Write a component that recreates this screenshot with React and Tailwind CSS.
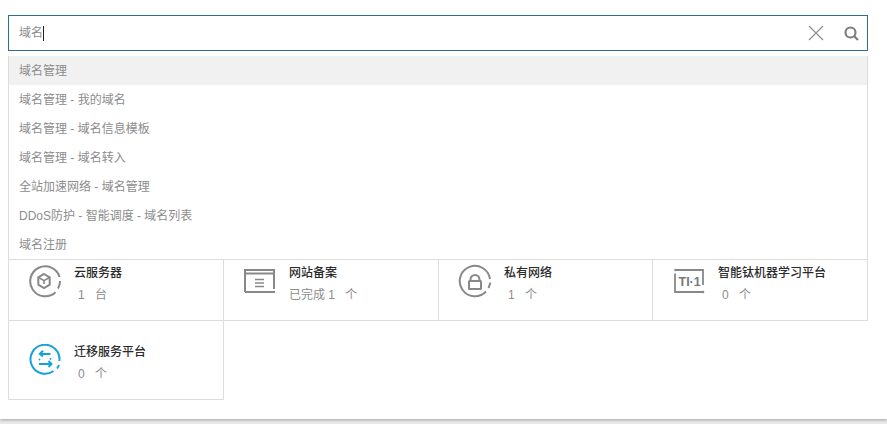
import { useState } from "react";

const font = "font-['Liberation_Sans','Noto_Sans_CJK_SC',sans-serif]";

const suggestions = [
  "域名管理",
  "域名管理 - 我的域名",
  "域名管理 - 域名信息模板",
  "域名管理 - 域名转入",
  "全站加速网络 - 域名管理",
  "DDoS防护 - 智能调度 - 域名列表",
  "域名注册",
];

function ServerIcon() {
  return (
    <svg width="34" height="34" viewBox="0 0 34 34" fill="none" stroke="#87888a" strokeWidth="2">
      <path d="M27.5 28.2A15 15 0 1 1 31.6 13" />
      <path d="M32 17a15 15 0 0 1-2 7.5" />
      <path d="M16 10l5.700 3.300v7.400L16 24l-5.700-3.300v-7.400z" />
      <path d="M11 13.800l5 2.900 5-2.900M16 16.700v3.300" strokeWidth="1.600" />
    </svg>
  );
}

function RecordIcon() {
  return (
    <svg width="32" height="28" viewBox="0 0 32 28" fill="none" stroke="#87888a" strokeWidth="2">
      <path d="M1 25V3h29v19" />
      <path d="M1 6.500h29" />
      <path d="M1 25h30" />
      <path d="M11 12.500h9M11 16h9M11 19.500h9" strokeWidth="1.500" />
    </svg>
  );
}

function VpcIcon() {
  return (
    <svg width="34" height="34" viewBox="0 0 34 34" fill="none" stroke="#87888a" strokeWidth="2">
      <path d="M28 27.500A15.200 15.200 0 1 1 32 15" />
      <path d="M32.200 18.500a15 15 0 0 1-1.800 5.500" />
      <rect x="11" y="17" width="12" height="8" rx="0.500" />
      <path d="M12.500 17v-1.500a4.500 4.500 0 0 1 9 0V17" />
    </svg>
  );
}

function TiIcon() {
  return (
    <svg width="32" height="28" viewBox="0 0 32 28" fill="none" stroke="#87888a" strokeWidth="1.800">
      <path d="M2 3h28v15" />
      <path d="M2 6.500V25h28" />
      <circle cx="2.500" cy="3" r="1.300" fill="#87888a" stroke="none" />
      <circle cx="30" cy="25" r="1.300" fill="#87888a" stroke="none" />
      <text x="5.500" y="19" fontSize="12.500" fontWeight="700" fill="#77787a" stroke="none" fontFamily="Liberation Sans">TI·1</text>
    </svg>
  );
}

function MigrateIcon() {
  return (
    <svg width="32" height="32" viewBox="0 0 32 32" fill="none" stroke="#12a3dc" strokeWidth="2">
      <path d="M24.500 27A14.500 14.500 0 1 1 30.400 17" />
      <path d="M30 21a14.500 14.500 0 0 1-2 3.500" />
      <path d="M21.500 10H11M14 6.800L10.800 10l3.200 2.500" />
      <path d="M10 20h12.500M19.500 17l3 3-3 3" />
      <circle cx="10.500" cy="15.500" r="0.900" fill="#12a3dc" stroke="none" />
      <circle cx="21.500" cy="15" r="0.900" fill="#12a3dc" stroke="none" />
    </svg>
  );
}

function Card({ icon, title, count, unit, className, countClass = "pl-1", rowClass = "h-20 pt-[23px]" }) {
  return (
    <div className={`flex items-start border-[#dddddd] pl-[19px] ${rowClass} ${className}`}>
      <div className="flex h-[34px] w-[34px] shrink-0 items-center justify-center">{icon}</div>
      <div className="ml-3 text-xs leading-[18px]">
        <div className="font-medium text-[#2b2b2b]">{title}</div>
        <div className={`mt-1 text-[#8c8c8c] ${countClass}`}>
          {count} <span className="ml-[7px]">{unit}</span>
        </div>
      </div>
    </div>
  );
}

export default function App() {
  const [query] = useState("域名");

  return (
    <div className={`h-[424px] overflow-hidden bg-[#e9e9e9] ${font}`}>
      <div className="h-[419px] bg-white px-2 pt-[15px] shadow-[0_1px_3px_rgba(0,0,0,0.3)]">
        <div className="relative w-[860px]">
          <div className="flex h-9 items-center border border-[#2f6f8f] bg-white pl-[10px] pr-2">
            <span className="text-xs text-[#8c8c8c]">{query}</span>
            <span className="h-[15px] w-px bg-[#222222]" />
            <svg className="ml-auto" width="16" height="16" viewBox="0 0 16 16" stroke="#8f8f8f" strokeWidth="1.200">
              <path d="M1 1l14 14M15 1L1 15" />
            </svg>
            <svg className="ml-5" width="15" height="15" viewBox="0 0 15 15" fill="none" stroke="#7d7d7d" strokeWidth="2.200">
              <circle cx="6.500" cy="6.500" r="5" />
              <path d="M10.500 10.500l3.500 3.500" />
            </svg>
          </div>

          <ul className="absolute left-0 top-[41px] z-10 w-full border border-t-0 border-[#dddddd] bg-white">
            {suggestions.map((item, i) => (
              <li
                key={item}
                className={`h-[29px] px-[10px] text-xs leading-[31px] text-[#8c8c8c] ${i === 0 ? "bg-[#f1f1f1]" : ""}`}
              >
                {item}
              </li>
            ))}
          </ul>

          <div className="mt-[190px] grid w-[860px] grid-cols-[216px_215px_214px_215px]">
            <Card icon={<ServerIcon />} title="云服务器" count="1" unit="台" className="border-b border-l border-r" />
            <Card icon={<RecordIcon />} title="网站备案" count="已完成 1" unit="个" countClass="" className="border-b border-r" />
            <Card icon={<VpcIcon />} title="私有网络" count="1" unit="个" className="border-b border-r" />
            <Card icon={<TiIcon />} title="智能钛机器学习平台" count="0" unit="个" className="border-b border-r" />
            <Card icon={<MigrateIcon />} title="迁移服务平台" count="0" unit="个" rowClass="h-[79px] pt-[22px]" className="border-b border-l border-r" />
          </div>
        </div>
      </div>
    </div>
  );
}
